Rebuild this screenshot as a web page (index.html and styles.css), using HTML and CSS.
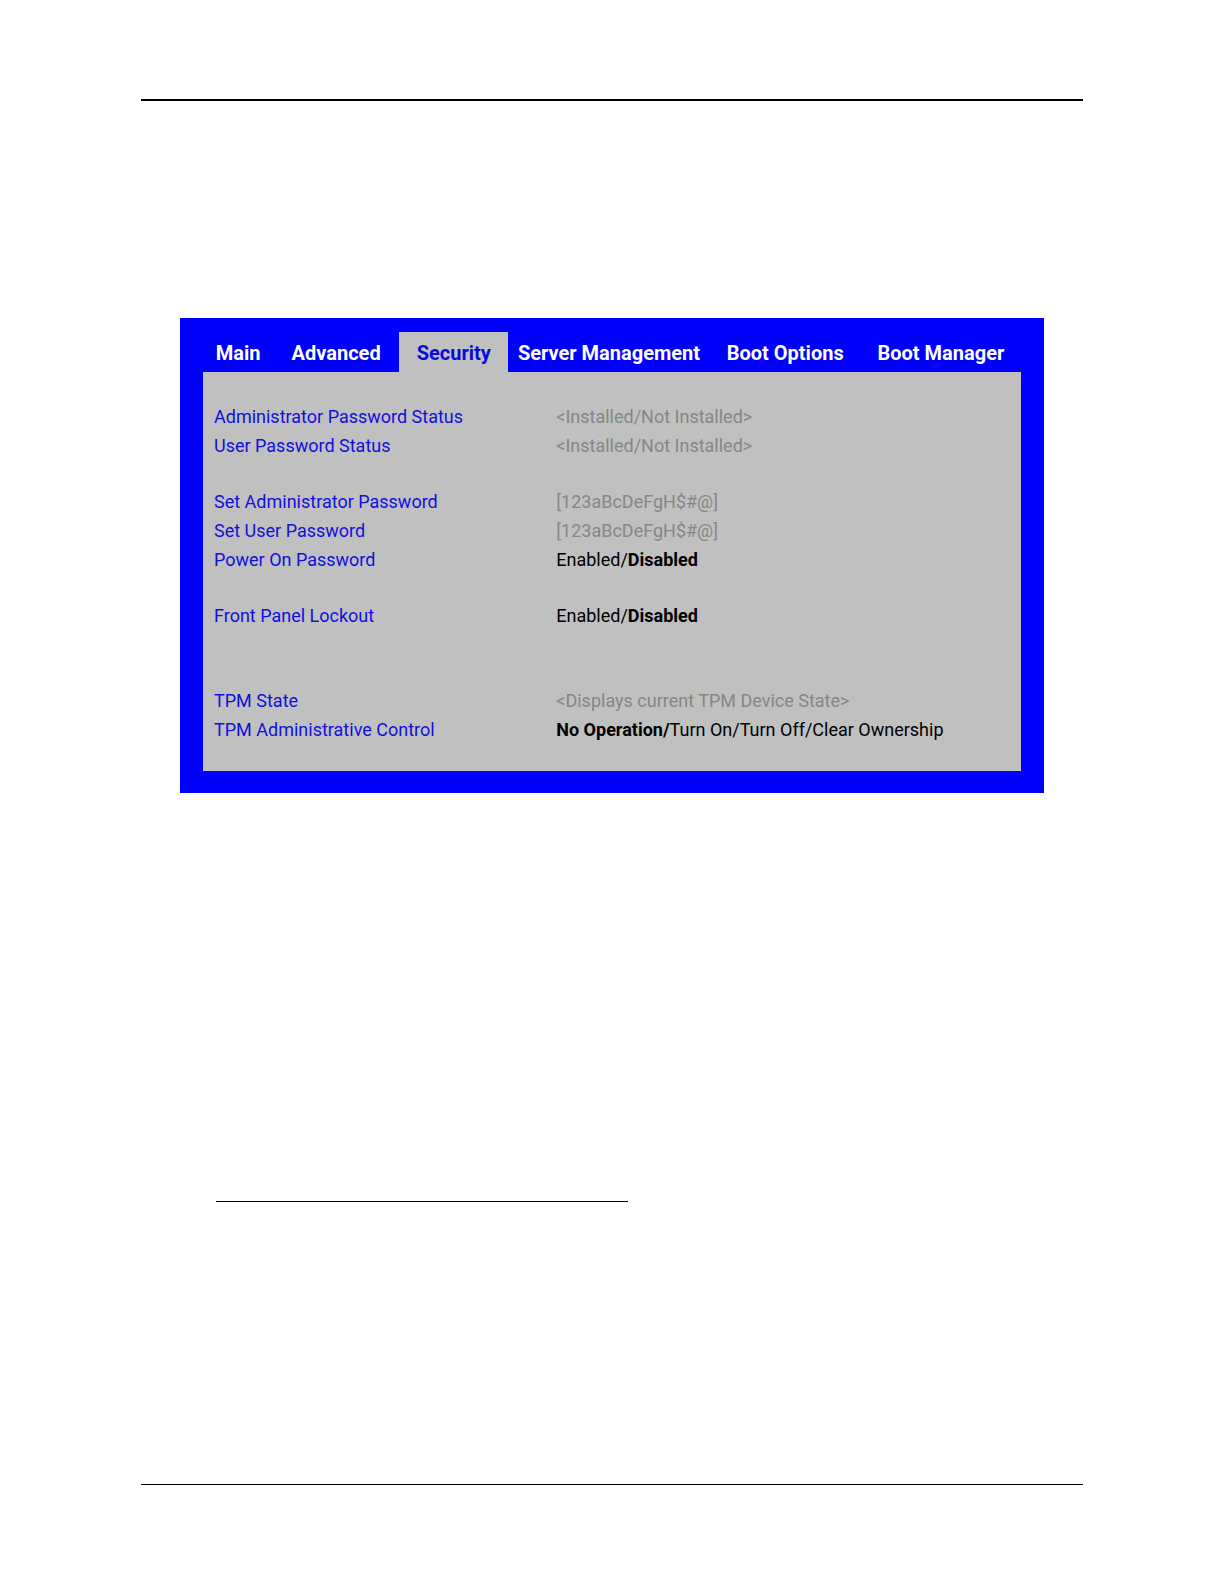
FILE: index.html
```html
<!DOCTYPE html>
<html lang="en">
<head>
    <meta charset="utf-8">
    <meta name="viewport" content="width=device-width, initial-scale=1">
    <title>BIOS Setup - Security</title>
    <link rel="stylesheet" href="styles.css">
</head>
<body>
    <div class="page">
        <main class="content">
            <section class="bios">
                <nav class="tabs">
                    <button type="button" class="tab">Main</button>
                    <button type="button" class="tab">Advanced</button>
                    <button type="button" class="tab active" aria-current="page">Security</button>
                    <button type="button" class="tab">Server Management</button>
                    <button type="button" class="tab">Boot Options</button>
                    <button type="button" class="tab">Boot Manager</button>
                </nav>
                <div class="screen">
                    <table class="settings">
                        <tbody>
                            <tr>
                                <th scope="row">Administrator Password Status</th>
                                <td class="readonly">&lt;Installed/Not Installed&gt;</td>
                            </tr>
                            <tr>
                                <th scope="row">User Password Status</th>
                                <td class="readonly">&lt;Installed/Not Installed&gt;</td>
                            </tr>
                        </tbody>
                        <tbody class="group">
                            <tr>
                                <th scope="row">Set Administrator Password</th>
                                <td class="readonly">[123aBcDeFgH$#@]</td>
                            </tr>
                            <tr>
                                <th scope="row">Set User Password</th>
                                <td class="readonly">[123aBcDeFgH$#@]</td>
                            </tr>
                            <tr>
                                <th scope="row">Power On Password</th>
                                <td>Enabled/<b>Disabled</b></td>
                            </tr>
                        </tbody>
                        <tbody class="group">
                            <tr>
                                <th scope="row">Front Panel Lockout</th>
                                <td>Enabled/<b>Disabled</b></td>
                            </tr>
                        </tbody>
                        <tbody class="group tpm">
                            <tr>
                                <th scope="row">TPM State</th>
                                <td class="readonly">&lt;Displays current TPM Device State&gt;</td>
                            </tr>
                            <tr>
                                <th scope="row">TPM Administrative Control</th>
                                <td><b>No Operation/</b>Turn On/Turn Off/Clear Ownership</td>
                            </tr>
                        </tbody>
                    </table>
                </div>
            </section>
            <hr class="note-rule">
        </main>
    </div>
</body>
</html>
```
FILE: styles.css
```css
*{
    box-sizing: border-box;
}
body{
    margin: 0;
    background: #fff;
    color: #000;
    font-family: Roboto, "Noto Sans", sans-serif;
    font-size: 18px;
}
.page{
    display: flex;
    min-height: 100vh;
    padding: 99px 141px;
}
.content{
    flex: 1;
    min-width: 0;
    padding: 217px 39px 0;
    border-top: 2px solid #000;
    border-bottom: 1px solid #000;
}
.bios{
    padding: 14px 23px 22px;
    background: #00f;
}
.tabs{
    display: grid;
    grid-template-columns: 70fr 126fr 109fr 201fr 151fr 160fr;
}
.tab{
    height: 40px;
    padding: 2px 0 0;
    border: 0;
    background: none;
    color: #fff;
    font: inherit;
    font-size: 20px;
    font-weight: 700;
    line-height: 38px;
    white-space: nowrap;
}
.tab.active{
    background: #c0c0c0;
    color: #0a0adc;
}
.screen{
    padding: 30px 11px 27px;
    background: #c0c0c0;
}
.settings{
    width: 100%;
    border-collapse: collapse;
    table-layout: fixed;
}
.settings th,
.settings td{
    padding: 0;
    line-height: 29px;
    text-align: left;
    vertical-align: bottom;
}
.settings th{
    width: 43%;
    color: #1010dc;
    font-weight: 400;
}
.settings .readonly{
    color: #868686;
}
.group tr:first-child > *{
    padding-top: 27px;
}
.tpm tr:first-child > *{
    padding-top: 56px;
}
.note-rule{
    width: 412px;
    max-width: 100%;
    height: 1px;
    margin: 408px 0 0 36px;
    border: 0;
    background: #000;
}
```
